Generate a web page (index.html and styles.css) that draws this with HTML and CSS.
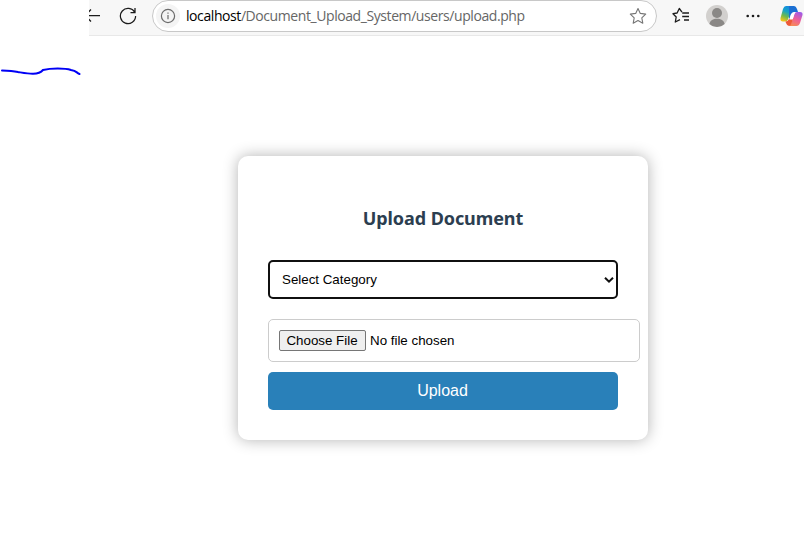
FILE: index.html
```html
<!DOCTYPE html>
<html lang="en">
<head>
<meta charset="utf-8">
<title>Upload Document</title>
<link rel="stylesheet" href="styles.css">
</head>
<body>
<header class="toolbar">
  <svg class="back" width="12" height="32" viewBox="0 0 12 32"><path d="M11 15.5H-1M2 9.5L-4 15.5L2 21.5"/></svg>
  <svg class="reload" width="18" height="32" viewBox="0 0 18 32"><path d="M15.7 12.4A7.6 7.6 0 1 0 16.6 16M11.5 12.5H16V8"/></svg>
  <div class="address">
    <span class="info"><svg width="24" height="24" viewBox="0 0 24 24"><circle cx="12" cy="12" r="6.6"/><path d="M12 11V15.2M12 8.5V9.8"/></svg></span>
    <span class="url"><b>localhost</b>/Document_Upload_System/users/upload.php</span>
    <svg class="star" width="18" height="18" viewBox="0 0 18 18"><path d="M9 1.500L11.300 6.400L16.700 7.100L12.800 10.800L13.800 16.200L9 13.600L4.200 16.200L5.200 10.800L1.300 7.100L6.700 6.400Z"/></svg>
  </div>
  <svg class="favorites" width="18" height="32" viewBox="0 0 18 32"><path d="M10 12.2L7.3 8.5L5.1 13L1 13.7L4.2 17L3.3 22L8 19.7M10.2 13H17M10.2 16.5H17M12 20H17"/></svg>
  <svg class="profile" width="22" height="32" viewBox="0 0 22 32"><circle cx="11" cy="16" r="11" fill="#d2d0ce"/><circle cx="11" cy="13" r="5" fill="#8a8886"/><path d="M3.4 24C4.2 20.2 7 18.8 11 18.8S17.8 20.2 18.6 24A11 11 0 0 1 3.4 24Z" fill="#8a8886"/></svg>
  <svg class="more" width="14" height="32" viewBox="0 0 14 32"><circle cx="1.7" cy="16" r="1.3"/><circle cx="7" cy="16" r="1.3"/><circle cx="12.3" cy="16" r="1.3"/></svg>
  <svg class="copilot" width="24" height="32" viewBox="0 0 24 32">
    <defs>
      <linearGradient id="cool" x1="0.7" y1="0" x2="0.3" y2="1"><stop offset="0" stop-color="#1685e5"/><stop offset=".4" stop-color="#16a5c5"/><stop offset=".7" stop-color="#72b94a"/><stop offset="1" stop-color="#f0c51b"/></linearGradient>
      <linearGradient id="warm" x1="0.7" y1="0" x2="0.3" y2="1"><stop offset="0" stop-color="#a05be8"/><stop offset=".5" stop-color="#ee5f9a"/><stop offset="1" stop-color="#f78a55"/></linearGradient>
    </defs>
    <path d="M6 6H14.500Q11.500 8 10.500 12L8 19.500Q7.300 21.500 5 21.500H3Q0 21.500 .5 18L3 9Q4 6 6 6Z" fill="url(#cool)"/>
    <path d="M9 6H14Q16 6 17 9L18 12H15Q12.500 12 11 14L9 20Z" fill="#1b6fd3"/>
    <path d="M17 12H20Q23 12 22.500 15L20 23Q19 26 16.500 26H9Q11.500 24 12.500 20L14.500 14Q15 12 17 12Z" fill="url(#warm)"/>
    <path d="M5.400 21.500Q8 21.500 9 19H13L11.500 23.500Q10.500 26 9 26Q7 26 6 23Z" fill="#ee5a38"/>
    <path d="M14.500 12H15.500Q14.700 12.500 14.300 14L12.600 19.500H9.500L11 14.500Q12 12 14.500 12Z" fill="#fff"/>
  </svg>
</header>
<svg class="scribble" width="89" height="20" viewBox="0 0 89 20"><path d="M2 5.500C8 5.700 13 6 18 7C27 8.500 38 11 43 5C51 3 65 3 71 5C77 6 76 7.500 79.500 9"/></svg>
<main class="page">
  <form class="card">
    <h2>Upload Document</h2>
    <div class="select"><span>Select Category</span><svg width="10" height="8" viewBox="0 0 10 8"><path d="M1 1.700L5 5.700L9 1.700"/></svg></div>
    <div class="file"><button type="button">Choose File</button><span>No file chosen</span></div>
    <button class="submit" type="button">Upload</button>
  </form>
</main>
</body>
</html>
```
FILE: styles.css
```css
* { box-sizing: border-box; }
body { margin: 0; height: 545px; overflow: hidden; background: #fff; font-family: "Liberation Sans", Arial, sans-serif; }
svg { display: block; flex: none; fill: none; }
.toolbar { display: flex; align-items: flex-start; height: 36px; margin-left: 89px; background: #f7f7f7; border-bottom: 1px solid #e8e8e8; }
.back, .reload { stroke: #1b1b1b; stroke-width: 1.25; }
.reload { margin-left: 18px; }
.address { display: flex; align-items: center; flex: none; width: 505px; height: 32px; margin-left: 15px; padding: 0 9px 0 3px; background: #fff; border: 1px solid #c8c8c8; border-radius: 16px; }
.info { width: 24px; height: 24px; border-radius: 50%; background: #f4f4f4; stroke: #6b6b6b; stroke-width: 1.2; }
.url { width: 339px; margin-left: 6px; color: #666; font: 14px/20px "Open Sans", "Noto Sans", sans-serif; letter-spacing: -.42px; white-space: nowrap; }
.url b { color: #000; font-weight: 400; }
.star { margin-left: auto; stroke: #767676; stroke-width: 1.1; stroke-linejoin: round; }
.favorites { margin-left: 15px; stroke: #1b1b1b; stroke-width: 1.3; stroke-linejoin: round; }
.profile { margin-left: 16px; }
.more { margin-left: 18px; fill: #1b1b1b; }
.copilot { margin-left: 20px; }
.scribble { margin-top: 29px; stroke: #0000f5; stroke-width: 2; stroke-linecap: round; }
.page { display: flex; justify-content: center; padding: 71px 0 0 82px; }
.card { width: 410px; height: 284px; padding: 30px; background: #fff; border-radius: 10px; box-shadow: 0 0 15px rgba(0, 0, 0, .3); }
h2 { margin: 20px 0 29px; color: #2c3e50; font: 700 18px/25px "Noto Sans", "Open Sans", sans-serif; letter-spacing: -.08px; text-align: center; white-space: nowrap; }
.select { display: flex; align-items: center; justify-content: space-between; height: 39px; padding: 0 2px 0 12px; border: 2px solid #101010; border-radius: 5px; color: #000; font-size: 13.333px; }
.select svg { stroke: #101010; stroke-width: 2; }
.file { display: flex; align-items: center; width: 372px; height: 43px; margin-top: 20px; padding: 0 10px; border: 1px solid #ccc; border-radius: 5px; font-size: 13.333px; }
.file button { width: 87px; height: 21px; margin-right: 4px; padding: 0 1px 0 0; border: 1px solid #767676; border-radius: 2px; background: #efefef; color: #000; font: inherit; }
.submit { display: block; width: 350px; height: 38px; margin-top: 10px; padding: 0 1px 0 0; border: 0; border-radius: 5px; background: #2980b9; color: #fff; font: 16px "Liberation Sans", Arial, sans-serif; }
```
